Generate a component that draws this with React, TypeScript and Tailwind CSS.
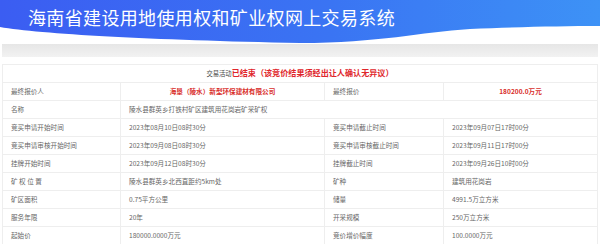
import React from "react";

const font = { fontFamily: '"Noto Sans CJK SC", "Noto Sans", sans-serif' };

type Row = [string, string, string, string];

const rows: Row[] = [
  ["竞买申请开始时间", "2023年08月10日08时30分", "竞买申请截止时间", "2023年09月07日17时00分"],
  ["竞买申请审核开始时间", "2023年09月08日08时30分", "竞买申请审核截止时间", "2023年09月11日17时00分"],
  ["挂牌开始时间", "2023年09月12日08时30分", "挂牌截止时间", "2023年09月26日10时00分"],
  ["矿 权 位 置", "陵水县群英乡北西直距约5km处", "矿种", "建筑用花岗岩"],
  ["矿区面积", "0.75平方公里", "储量", "4991.5万立方米"],
  ["服务年限", "20年", "开采规模", "250万立方米"],
  ["起始价", "180000.0000万元", "竞价增价幅度", "100.0000万元"],
];

const cell = "flex items-center px-[8px] text-[6.6px] text-[#666] border-r border-[#eee] whitespace-nowrap";

export default function App() {
  return (
    <div className="w-[600px] h-[244px] overflow-hidden bg-white" style={font}>
      <div className="relative h-[44px]">
        <svg className="absolute inset-0" width="600" height="44" viewBox="0 0 600 44">
          <defs>
            <linearGradient id="g" x1="0" y1="0" x2="1" y2="0">
              <stop offset="0" stopColor="#3b5df2" />
              <stop offset="0.55" stopColor="#3a74f3" />
              <stop offset="1" stopColor="#3d92f6" />
            </linearGradient>
          </defs>
          <path
            d="M0,0 H600 V26 C560,26 520,27 470,29 C420,32 380,43 300,43 C150,40 40,34 0,27 Z"
            fill="url(#g)"
          />
        </svg>
        <div className="relative pl-[28px] pt-[5px] text-[18px] leading-[24px] text-white tracking-[0.35px]">
          海南省建设用地使用权和矿业权网上交易系统
        </div>
      </div>
      <div className="mx-[2px] h-[13px] bg-gradient-to-b from-[#e6e6e6] to-[#f2f2f2]" />
      <div className="h-[7px]" />
      <div className="mx-[2px] border-t border-l border-[#eee]">
        <div className="h-[18px] flex items-center justify-center border-b border-r border-[#eee]">
          <span className="text-[6.3px] text-[#444]">交易活动</span>
          <span className="text-[8.1px] font-bold text-[#e0262b]">已结束（该竞价结果须经出让人确认无异议）</span>
        </div>
        <div className="grid grid-cols-[118px_204px_119px_1fr] h-[18px] border-b border-[#eee]">
          <div className={cell}>最终报价人</div>
          <div className={cell + " justify-center"}>
            <span className="font-bold text-[#d9302c]">海垦（陵水）新型环保建材有限公司</span>
          </div>
          <div className={cell}>最终报价</div>
          <div className={cell + " justify-center"}>
            <span className="font-bold text-[#d9302c]">180200.0万元</span>
          </div>
        </div>
        <div className="grid grid-cols-[118px_1fr] h-[18px] border-b border-[#eee]">
          <div className={cell}>名称</div>
          <div className={cell}>陵水县群英乡打铁村矿区建筑用花岗岩矿采矿权</div>
        </div>
        {rows.map((r, i) => (
          <div key={i} className="grid grid-cols-[118px_204px_119px_1fr] h-[18px] border-b border-[#eee]">
            <div className={cell}>{r[0]}</div>
            <div className={cell}>{r[1]}</div>
            <div className={cell}>{r[2]}</div>
            <div className={cell}>{r[3]}</div>
          </div>
        ))}
      </div>
    </div>
  );
}
